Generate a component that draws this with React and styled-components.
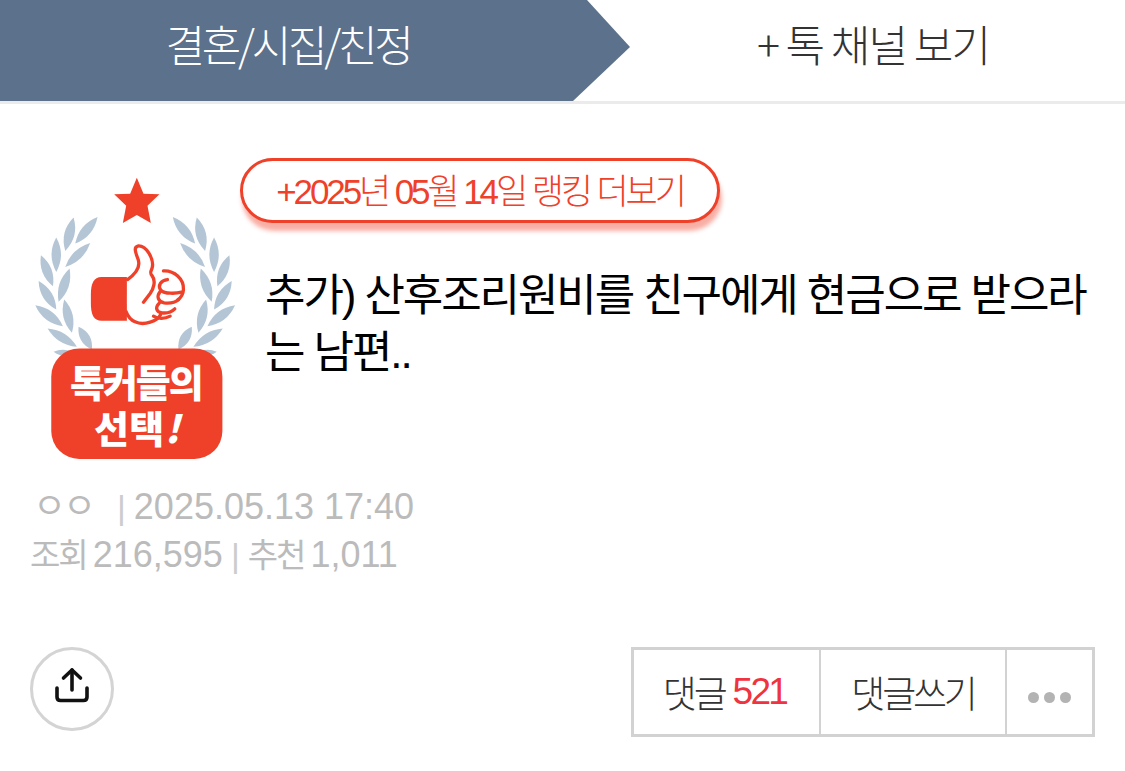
import React from 'react';
import styled, { createGlobalStyle } from 'styled-components';

const FONT = `"Liberation Sans", "Noto Sans CJK KR", sans-serif`;

const GlobalStyle = createGlobalStyle`
    html, body {
        margin: 0;
        padding: 0;
        background: #ffffff;
    }
    body {
        font-family: ${FONT};
    }
`;

const leaves = [
    [165, 250, 232, 170, 15], [135, 272, 160, 172, 16], [135, 320, 210, 248, 14],
    [108, 335, 108, 232, 15], [115, 425, 148, 325, 15], [98, 378, 62, 285, 15],
    [155, 518, 132, 418, 15], [108, 448, 55, 362, 15], [128, 498, 45, 435, 15],
    [215, 568, 175, 500, 15], [170, 560, 82, 505, 14], [165, 582, 100, 575, 10],
];

function leafPath([x1, y1, x2, y2, w]) {
    const mx = (x1 + x2) / 2;
    const my = (y1 + y2) / 2;
    const dx = x2 - x1;
    const dy = y2 - y1;
    const len = Math.hypot(dx, dy);
    const nx = (-dy / len) * w * 1.9;
    const ny = (dx / len) * w * 1.9;
    return `M${x1} ${y1}Q${mx + nx} ${my + ny} ${x2} ${y2}Q${mx - nx} ${my - ny} ${x1} ${y1}Z`;
}

function Badge() {
    return (
        <BadgeSvg viewBox="45 50 605 850">
            <path fill="#ef4129" d="M350 52L370 100L418 102L382 136L392 188L350 164L308 188L318 136L282 102L330 100Z" />
            <g fill="#b4c5d5">
                {leaves.map((l) => <path key={l.join()} d={leafPath(l)} />)}
                <g transform="translate(690 0) scale(-1 1)">
                    {leaves.map((l) => <path key={l.join()} d={leafPath(l)} />)}
                </g>
            </g>
            <g transform="translate(150 210)">
                <path fill="#ef4129" d="M170 140H94C70 140 62 160 62 192V220C62 252 70 272 94 272H170Z" />
                <g fill="none" stroke="#ef4129" strokeWidth="10" strokeLinecap="round" strokeLinejoin="round">
                    <path d="M172 148C195 132 212 112 204 88C197 68 188 50 205 47C228 46 250 84 247 108C245 124 236 124 246 137C258 152 250 176 240 190L220 216" />
                    <path d="M168 245C178 272 205 288 240 276C262 270 268 262 272 252" />
                    <path d="M280 122C312 120 342 146 340 178C339 196 330 204 322 210" />
                    <path d="M292 148C272 150 262 166 272 180C284 192 318 190 334 186" />
                    <path d="M270 184C258 200 264 214 282 218C298 220 316 216 326 208" />
                    <path d="M268 218C254 232 258 246 276 248C292 250 306 244 314 236" />
                    <path d="M250 258C262 266 282 268 300 258" />
                </g>
            </g>
            <rect x="93" y="565" width="514" height="332" rx="84" fill="#ef4129" />
            <BadgeText x="350" y="712" textLength="402" lengthAdjust="spacing">톡커들의</BadgeText>
            <BadgeText x="350" y="848" textLength="258" lengthAdjust="spacing">선택<tspan fontStyle="italic">!</tspan></BadgeText>
        </BadgeSvg>
    );
}

function ShareIcon() {
    return (
        <svg width="36" height="36" viewBox="0 0 36 36" fill="none" stroke="#111" strokeWidth="3.6" strokeLinecap="round" strokeLinejoin="round">
            <path d="M18 23V3" />
            <path d="M9.5 11L18 3L26.5 11" />
            <path d="M3 21V30Q3 33.5 6.5 33.5H29.5Q33 33.5 33 30V21" />
        </svg>
    );
}

export default function App() {
    return (
        <Page>
            <GlobalStyle />
            <Header>
                <Channel>결혼/시집/친정</Channel>
                <MoreChannels>+ 톡 채널 보기</MoreChannels>
            </Header>
            <Post>
                <Badge />
                <PostHead>
                    <RankLink>+2025년 05월 14일 랭킹 더보기</RankLink>
                    <Title>추가) 산후조리원비를 친구에게 현금으로 받으라는 남편..</Title>
                </PostHead>
            </Post>
            <Meta>
                <MetaRow><Author>ㅇㅇ</Author><Sep>|</Sep>2025.05.13 17:40</MetaRow>
                <MetaRow><Label>조회</Label>216,595<Sep $left={8}>|</Sep><Label>추천</Label>1,011</MetaRow>
            </Meta>
            <Actions>
                <ShareButton><ShareIcon /></ShareButton>
                <ButtonGroup>
                    <GroupButton $width={187} $pad={4}>댓글 <Count>521</Count></GroupButton>
                    <GroupButton $width={186}>댓글쓰기</GroupButton>
                    <MoreButton>
                        <Dot /><Dot /><Dot />
                    </MoreButton>
                </ButtonGroup>
            </Actions>
        </Page>
    );
}

const Page = styled.div`
    width: 1125px;
    height: 771px;
    overflow: hidden;
    background: #ffffff;
`;

const Header = styled.div`
    display: flex;
    height: 101px;
    border-bottom: 3px solid #ebebeb;
    font-family: "Noto Sans CJK KR", sans-serif;
    line-height: 1;
`;

const Channel = styled.div`
    width: 630px;
    padding: 0 54px 15px 0;
    box-sizing: border-box;
    display: flex;
    align-items: center;
    justify-content: center;
    background: #5b718c;
    clip-path: polygon(0 0, 587px 0, 630px 47px, 573px 101px, 0 101px);
    color: #ffffff;
    font-size: 43px;
    font-weight: 300;
    letter-spacing: -3.3px;
`;

const MoreChannels = styled.div`
    flex: 1;
    display: flex;
    align-items: center;
    justify-content: center;
    padding: 0 9px 15px 0;
    color: #333333;
    font-size: 43px;
    font-weight: 300;
    letter-spacing: -1.9px;
`;

const Post = styled.div`
    display: flex;
    align-items: flex-start;
    padding: 54px 0 0 35px;
`;

const BadgeSvg = styled.svg`
    flex: none;
    width: 202px;
    height: 283px;
    margin-top: 19px;
`;

const BadgeText = styled.text`
    fill: #ffffff;
    font-family: "Noto Sans CJK KR", sans-serif;
    font-weight: 900;
    font-size: 114px;
    text-anchor: middle;
`;

const PostHead = styled.div`
    flex: 1;
    padding-left: 3px;
`;

const RankLink = styled.div`
    width: 480px;
    height: 65px;
    box-sizing: border-box;
    display: flex;
    align-items: center;
    justify-content: center;
    padding-bottom: 4px;
    border: 3px solid #ef4129;
    border-radius: 33px;
    background: #ffffff;
    box-shadow: 2px 8px 4px rgba(239, 65, 41, 0.42);
    color: #ef4129;
    font-size: 35px;
    font-weight: 300;
    letter-spacing: -3.1px;
`;

const Title = styled.h1`
    margin: 44px 30px 0 25px;
    color: #000000;
    font-size: 44px;
    line-height: 57px;
    font-weight: 400;
    letter-spacing: -2.1px;
    word-break: break-all;
`;

const Meta = styled.div`
    margin-top: 23px;
    padding-left: 30px;
    color: #bbbbbb;
    font-size: 36px;
    line-height: 47px;
`;

const MetaRow = styled.div`
    white-space: pre;
`;

const Author = styled.span`
    display: inline-block;
    width: 87px;
    padding-left: 3px;
    box-sizing: border-box;
    letter-spacing: -3px;
`;

const Sep = styled.span`
    margin: 0 8px 0 ${(p) => p.$left || 0}px;
    color: #cccccc;
    font-size: 34px;
    font-weight: 300;
`;

const Label = styled.span`
    margin-right: 6px;
    font-size: 33px;
    letter-spacing: -2px;
`;

const Actions = styled.div`
    display: flex;
    align-items: flex-start;
    justify-content: space-between;
    margin-top: 68px;
    padding: 0 30px;
`;

const ShareButton = styled.div`
    width: 84px;
    height: 84px;
    box-sizing: border-box;
    display: flex;
    align-items: center;
    justify-content: center;
    padding-bottom: 8px;
    border: 3px solid #d4d4d4;
    border-radius: 50%;
`;

const ButtonGroup = styled.div`
    display: flex;
    width: 464px;
    height: 90px;
    box-sizing: border-box;
    border: 3px solid #d2d2d2;
`;

const GroupButton = styled.div`
    width: ${(p) => p.$width}px;
    box-sizing: border-box;
    display: flex;
    align-items: center;
    justify-content: center;
    gap: 8px;
    padding-right: ${(p) => p.$pad || 0}px;
    border-right: 2px solid #d2d2d2;
    color: #333333;
    font-size: 37px;
    font-weight: 300;
    letter-spacing: -3.2px;
`;

const Count = styled.span`
    color: #ef3340;
    letter-spacing: -2.7px;
`;

const MoreButton = styled.div`
    flex: 1;
    display: flex;
    align-items: center;
    justify-content: center;
    gap: 5px;
    padding-top: 10px;
`;

const Dot = styled.span`
    width: 11px;
    height: 11px;
    border-radius: 50%;
    background: #b3b3b3;
`;
